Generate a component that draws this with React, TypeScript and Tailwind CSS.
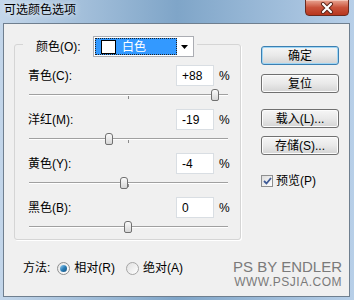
import React from 'react';

interface Channel {
  label: string;
  value: number;
}

const channels: Channel[] = [
  { label: '青色(C):', value: 88 },
  { label: '洋红(M):', value: -19 },
  { label: '黄色(Y):', value: -4 },
  { label: '黑色(B):', value: 0 },
];

const fmt = (v: number) => (v > 0 ? `+${v}` : `${v}`);

function Win7Button({ children, primary }: { children: React.ReactNode; primary?: boolean }) {
  return (
    <div
      className={`w-[78px] h-[19px] rounded-[3px] border flex items-center justify-center text-[12px] leading-none text-black bg-gradient-to-b from-[#f6f6f6] via-[#e9e9e9] to-[#d4d4d4] ${
        primary ? 'border-[#3c7fb1] shadow-[inset_0_0_0_1px_#9fd6f5]' : 'border-[#707070] shadow-[inset_0_0_0_1px_#fcfcfc]'
      }`}
    >
      {children}
    </div>
  );
}

function Slider({ value, last }: { value: number; last: boolean }) {
  const left = ((value + 100) / 200) * 198 - 4;
  return (
    <div className={`relative ml-[1px] mr-[2px] ${last ? 'h-[20px]' : 'h-[23px]'}`}>
      <div className="absolute left-0 right-0 top-[8px] h-[2px] border-t border-[#a0a0a0] border-b border-b-white bg-[#e3e3e3]" />
      <div className="absolute left-[99px] top-[10px] w-[1px] h-[3px] bg-[#8a8a8a]" />
      <div
        className="absolute top-[3px] w-[8px] h-[12px] rounded-t-[3px] rounded-b-[2px] border border-[#707070] bg-gradient-to-b from-[#fbfbfb] to-[#d6d6d6]"
        style={{ left }}
      />
    </div>
  );
}

export default function App() {
  return (
    <div
      className="w-[354px] h-[300px] overflow-hidden flex flex-col bg-gradient-to-r from-[#c3d6ea] via-[#7fa5c8] to-[#b7cfe8] text-[12px] text-black"
      style={{ fontFamily: '"Liberation Sans", "Noto Sans CJK SC", sans-serif' }}
    >
      {/* 标题栏 */}
      <div className="h-[23px] flex items-start relative">
        <span className="ml-[4px] mt-[3px] text-[12px] leading-[14px] text-black [text-shadow:0_0_6px_#ffffff]">可选颜色选项</span>
        <div className="absolute left-[305px] top-[-1px] w-[44px] h-[17px] rounded-b-[4px] border border-[#6b2a1e] bg-gradient-to-b from-[#e8a593] via-[#c9523a] to-[#b8361d] flex items-center justify-center shadow-[inset_0_1px_0_#f3c4b6]">
          <svg width="14" height="12" viewBox="0 0 14 12">
            <path d="M3 2 L11 10 M11 2 L3 10" stroke="#5a2318" strokeWidth="4" strokeLinecap="round" />
            <path d="M3 2 L11 10 M11 2 L3 10" stroke="#ffffff" strokeWidth="2.2" strokeLinecap="round" />
          </svg>
        </div>
      </div>

      {/* 客户区 */}
      <div className="ml-[3px] mr-[4px] h-[274px] border border-[#6f7f8f] bg-[#f0f0f0] pl-[10px] pt-[12px] flex flex-col">
        <div className="flex">
          {/* 左侧分组 */}
          <div className="pt-[8px]">
            <div className="relative w-[227px] h-[196px] border border-[#d5d5d5] rounded-[3px] shadow-[1px_1px_0_#ffffff] pl-[13px] pr-[10px] pt-[20px]">
              <div className="absolute left-[8px] top-[-9px] bg-[#f0f0f0] pl-[13px] pr-[3px] flex items-center">
                <span className="w-[57px]">颜色(O):</span>
                <div className="w-[101px] h-[21px] border border-[#abadb3] bg-white flex items-center p-[1px]">
                  <div className="h-full w-[82px] bg-[#3399ff] border border-dotted border-[#222] flex items-center pl-[5px]">
                    <div className="w-[15px] h-[14px] border border-black bg-white" />
                    <span className="ml-[6px] text-white">白色</span>
                  </div>
                  <div className="flex-1 flex items-center justify-center">
                    <svg width="7" height="4" viewBox="0 0 7 4">
                      <path d="M0 0 H7 L3.5 4 Z" fill="#000" />
                    </svg>
                  </div>
                </div>
              </div>

              {channels.map((c, i) => (
                <div key={c.label}>
                  <div className="h-[21px] flex items-center">
                    <span className="flex-1">{c.label}</span>
                    <div className="w-[38px] h-[21px] border border-[#d9dee3] bg-white pl-[5px] flex items-center">{fmt(c.value)}</div>
                    <span className="ml-[5px] w-[11px]">%</span>
                  </div>
                  <Slider value={c.value} last={i === channels.length - 1} />
                </div>
              ))}
            </div>
          </div>

          {/* 右侧按钮 */}
          <div className="ml-[20px] pt-[10px] flex flex-col">
            <Win7Button primary>确定</Win7Button>
            <div className="mt-[9px]">
              <Win7Button>复位</Win7Button>
            </div>
            <div className="mt-[16px]">
              <Win7Button>载入(L)...</Win7Button>
            </div>
            <div className="mt-[8px]">
              <Win7Button>存储(S)...</Win7Button>
            </div>
            <div className="mt-[17px] flex items-center">
              <div className="w-[12px] h-[12px] border border-[#8e8f8f] bg-gradient-to-br from-[#dcdcdc] to-[#ffffff] flex items-center justify-center">
                <svg width="9" height="8" viewBox="0 0 9 8">
                  <path d="M1 4 L3.5 6.5 L8 1" stroke="#3e5a96" strokeWidth="1.8" fill="none" />
                </svg>
              </div>
              <span className="ml-[3px]">预览(P)</span>
            </div>
          </div>
        </div>

        {/* 底部 */}
        <div className="mt-[18px] flex items-start">
          <div className="ml-[9px] h-[20px] flex items-center">
            <span>方法:</span>
            <div className="ml-[7px] w-[13px] h-[13px] rounded-full border border-[#8e8f8f] bg-gradient-to-br from-[#e5e5e5] to-white flex items-center justify-center">
              <div className="w-[7px] h-[7px] rounded-full bg-gradient-to-br from-[#9ad3f3] via-[#2b7fb8] to-[#16527f]" />
            </div>
            <span className="ml-[4px]">相对(R)</span>
            <div className="ml-[11px] w-[13px] h-[13px] rounded-full border border-[#a5a5a5] bg-gradient-to-br from-[#e0e0e0] to-white" />
            <span className="ml-[4px]">绝对(A)</span>
          </div>
          <div className="ml-auto mr-[7px] flex flex-col items-end text-[#7a7a7a]">
            <span className="text-[15px] leading-[17px]">PS BY ENDLER</span>
            <span className="text-[12px] leading-[14px] tracking-[0.5px]">WWW.PSJIA.COM</span>
          </div>
        </div>
      </div>
    </div>
  );
}
